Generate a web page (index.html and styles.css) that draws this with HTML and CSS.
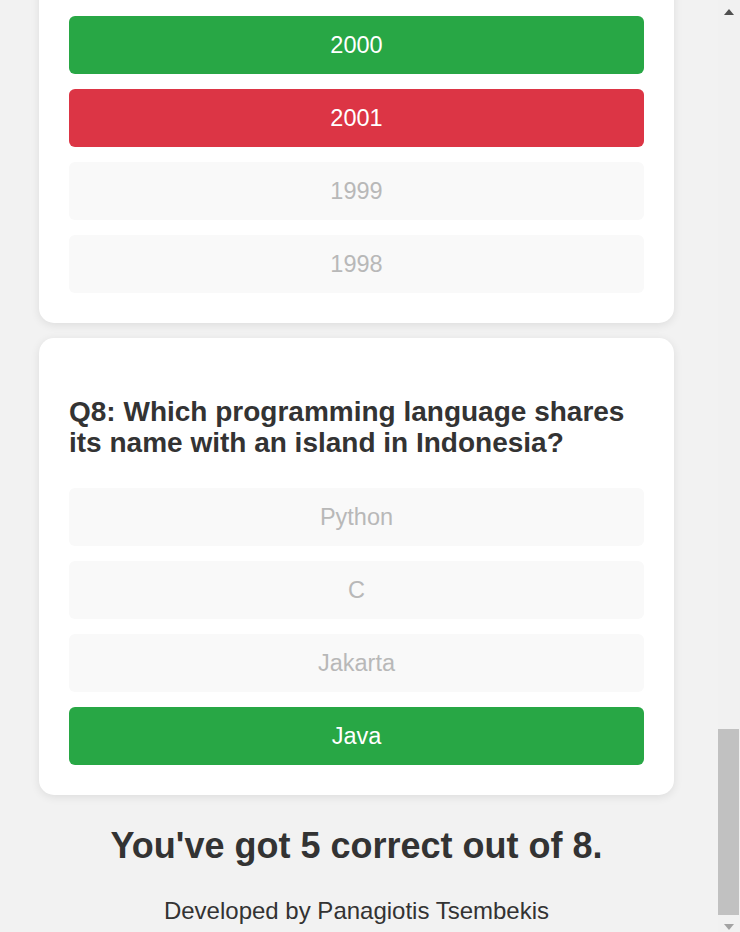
FILE: index.html
```html
<!DOCTYPE html>
<html lang="en">
<head>
<meta charset="utf-8">
<title>Quiz</title>
<link rel="stylesheet" href="styles.css">
</head>
<body>
<div class="page">
  <header class="header">
    <h1 class="title">Tech Trivia Quiz</h1>
    <p class="subtitle">Test your knowledge of computers, programming and the history of technology.</p>
  </header>

  <main class="quiz">
    <section class="card">
      <h2 class="question">Q1: What does HTML stand for?</h2>
      <div class="options">
        <button class="option correct">HyperText Markup Language</button>
        <button class="option muted">HighText Machine Language</button>
        <button class="option muted">Hyperlink Text Management Language</button>
        <button class="option muted">Home Tool Markup Language</button>
      </div>
    </section>

    <section class="card">
      <h2 class="question">Q2: Who is known as the father of the modern computer?</h2>
      <div class="options">
        <button class="option muted">Alan Turing</button>
        <button class="option correct">Charles Babbage</button>
        <button class="option wrong">John von Neumann</button>
        <button class="option muted">Tim Berners-Lee</button>
      </div>
    </section>

    <section class="card">
      <h2 class="question">Q3: Which company created the JavaScript language?</h2>
      <div class="options">
        <button class="option muted">Microsoft</button>
        <button class="option muted">Sun Microsystems</button>
        <button class="option correct">Netscape</button>
        <button class="option muted">Google</button>
      </div>
    </section>

    <section class="card">
      <h2 class="question">Q4: What does CPU stand for?</h2>
      <div class="options">
        <button class="option muted">Central Process Unit</button>
        <button class="option correct">Central Processing Unit</button>
        <button class="option muted">Computer Personal Unit</button>
        <button class="option muted">Central Processor Utility</button>
      </div>
    </section>

    <section class="card">
      <h2 class="question">Q5: How many bits are there in a single byte of data?</h2>
      <div class="options">
        <button class="option muted">4</button>
        <button class="option correct">8</button>
        <button class="option wrong">16</button>
        <button class="option muted">32</button>
      </div>
    </section>

    <section class="card">
      <h2 class="question">Q6: Which symbol is used for comments in Python?</h2>
      <div class="options">
        <button class="option muted">//</button>
        <button class="option correct">#</button>
        <button class="option muted">--</button>
        <button class="option muted">/* */</button>
      </div>
    </section>

    <section class="card">
      <h2 class="question">Q7: In which year was the C# language first announced?</h2>
      <div class="options">
        <button class="option correct">2000</button>
        <button class="option wrong">2001</button>
        <button class="option muted">1999</button>
        <button class="option muted">1998</button>
      </div>
    </section>

    <section class="card">
      <h2 class="question">Q8: Which programming language shares its name with an island in Indonesia?</h2>
      <div class="options">
        <button class="option muted">Python</button>
        <button class="option muted">C</button>
        <button class="option muted">Jakarta</button>
        <button class="option correct">Java</button>
      </div>
    </section>
  </main>

  <h2 class="result">You've got 5 correct out of 8.</h2>
  <footer class="footer">Developed by Panagiotis Tsembekis</footer>
</div>

<div class="scrollbar" aria-hidden="true">
  <span class="sb-arrow sb-up"></span>
  <div class="sb-track"><div class="sb-thumb"></div></div>
  <span class="sb-arrow sb-down"></span>
</div>
<script src="script.js"></script>
</body>
</html>
```

FILE: styles.css
```css
html {
  background: #f2f2f2;
}

body {
  margin: 0;
  padding: 0 27px 8px 0;
  background: #f2f2f2;
  color: #333333;
  font-family: "Liberation Sans", Arial, sans-serif;
}

.page {
  max-width: 635px;
  margin: 0 auto;
}

.header {
  min-height: 560px;
  padding-top: 60px;
  box-sizing: border-box;
  text-align: center;
}

.title {
  margin: 0 0 20px;
  font-size: 40px;
  font-weight: bold;
}

.subtitle {
  margin: 0;
  font-size: 22px;
  line-height: 1.4;
}

.quiz {
  display: flex;
  flex-direction: column;
  gap: 15px;
}

.card {
  background: #ffffff;
  border-radius: 15px;
  padding: 30px;
  box-shadow: 0 2px 10px rgba(0, 0, 0, 0.09);
}

.question {
  margin: 28px 0 30px;
  font-size: 28px;
  line-height: 31px;
  font-weight: bold;
  color: #333333;
}

.options {
  display: flex;
  flex-direction: column;
  gap: 15px;
}

.option {
  display: block;
  width: 100%;
  border: none;
  border-radius: 6px;
  padding: 15px;
  font-family: "Liberation Sans", Arial, sans-serif;
  font-size: 23.5px;
  line-height: 28px;
  text-align: center;
  cursor: pointer;
}

.option.correct {
  background: #28a745;
  color: #ffffff;
}

.option.wrong {
  background: #dc3545;
  color: #ffffff;
}

.option.muted {
  background: #f9f9f9;
  color: #b8b8b8;
}

.result {
  margin: 30px 0 0;
  font-size: 36px;
  font-weight: bold;
  text-align: center;
  color: #333333;
}

.footer {
  margin-top: 30px;
  font-size: 24px;
  line-height: 27px;
  text-align: center;
  color: #333333;
}

/* classic window scrollbar drawn over the right edge */
.scrollbar {
  position: fixed;
  top: 0;
  right: 0;
  bottom: 0;
  width: 22px;
  background: #f1f1f1;
  display: flex;
  flex-direction: column;
  align-items: center;
}

.sb-arrow {
  width: 0;
  height: 0;
  box-sizing: content-box;
}

.sb-up {
  margin: 9px 0 8px;
  border-left: 5.5px solid transparent;
  border-right: 5.5px solid transparent;
  border-bottom: 6px solid #505050;
}

.sb-down {
  margin: 9px 0 2px;
  border-left: 5.5px solid transparent;
  border-right: 5.5px solid transparent;
  border-top: 6px solid #a3a3a3;
}

.sb-track {
  flex: 1;
  align-self: stretch;
  display: flex;
  flex-direction: column;
  justify-content: flex-end;
  padding-right: 1px;
}

.sb-thumb {
  height: 186px;
  background: #c1c1c1;
}
```

FILE: script.js
```js
function toBottom() {
  window.scrollTo(0, document.documentElement.scrollHeight);
}
toBottom();
window.addEventListener('load', toBottom);
```
